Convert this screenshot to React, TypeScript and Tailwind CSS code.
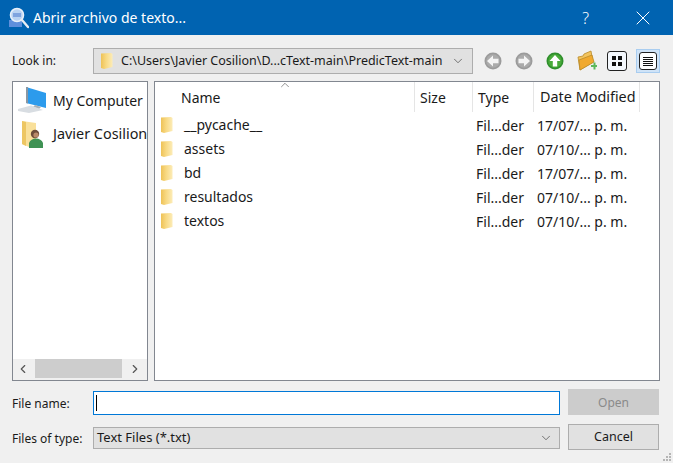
import { ChevronDown, ChevronLeft, ChevronRight, ChevronUp, X } from 'lucide-react';

const folders = [
    { name: '__pycache__', date: '17/07/... p. m.' },
    { name: 'assets', date: '07/10/... p. m.' },
    { name: 'bd', date: '17/07/... p. m.' },
    { name: 'resultados', date: '07/10/... p. m.' },
    { name: 'textos', date: '07/10/... p. m.' },
];

function FolderIcon() {
    return (
        <svg width="14" height="18" viewBox="0 0 14 18" className="shrink-0">
            <defs>
                <linearGradient id="folderFill" x1="0" y1="0" x2="1" y2="0">
                    <stop offset="0" stopColor="#eec257" />
                    <stop offset="0.45" stopColor="#f8d983" />
                    <stop offset="1" stopColor="#fcecb8" />
                </linearGradient>
            </defs>
            <path d="M1 1.5 L11 1 L12.5 2 L12.5 15 L4 17 L1 16 Z" fill="url(#folderFill)" />
        </svg>
    );
}

function SearchLogo() {
    return (
        <svg width="20" height="22" viewBox="0 0 20 22" className="shrink-0">
            <rect x="0" y="13" width="13" height="7" fill="#5f8fdc" />
            <circle cx="8" cy="8" r="6.5" fill="#b9d3f2" stroke="#e8f0fa" strokeWidth="1.6" />
            <rect x="4" y="6" width="8" height="4" fill="#7fa4df" />
            <path d="M13 13 L19 20" stroke="#e9edf3" strokeWidth="2.4" strokeLinecap="round" />
        </svg>
    );
}

function ArrowButton({ direction, green }: { direction: 'left' | 'right' | 'up'; green?: boolean }) {
    const rotate = direction === 'left' ? 'rotate(-90 9 9)' : direction === 'right' ? 'rotate(90 9 9)' : undefined;
    return (
        <svg width="18" height="18" viewBox="0 0 18 18">
            <circle cx="9" cy="9" r="8.5" fill={green ? '#2f8f2c' : '#9b9b9b'} />
            <circle cx="9" cy="9" r="6.8" fill={green ? '#49ab3a' : '#ababab'} />
            <path d="M9 3 L14.5 9 L11.2 9 L11.2 14.5 L6.8 14.5 L6.8 9 L3.5 9 Z" fill={green ? '#ffffff' : '#f4f4f4'} transform={rotate} />
        </svg>
    );
}

function NewFolderIcon() {
    return (
        <svg width="20" height="22" viewBox="0 0 20 22">
            <path d="M1 7 L6 6 L7 4 L14 1 L16 12 L3 20 Z" fill="#f2c35d" stroke="#b98a2a" strokeWidth="0.8" />
            <path d="M2 10 L15 5 L17 12 L3 20 Z" fill="#f0a92f" stroke="#b98a2a" strokeWidth="0.8" />
            <path d="M14 15 h2.5 v-2.5 h2 v2.5 h1.5 v2 h-1.5 v2.5 h-2 v-2.5 h-2.5 Z" fill="#5cb85c" />
        </svg>
    );
}

function MyComputerIcon() {
    return (
        <svg width="30" height="28" viewBox="0 0 30 28" className="shrink-0">
            <path d="M9 1 L29 7 L29 22 L9 17 Z" fill="#2c9bec" />
            <path d="M9 1 L11 1 L11 17.5 L9 17 Z" fill="#8a97a3" />
            <path d="M18 19 L24 21 L22 23 L16 21 Z" fill="#a6b0b8" />
            <path d="M1 23 L14 19.5 L26 24 L12 27 L1 25 Z" fill="#d8dde2" />
        </svg>
    );
}

function UserFolderIcon() {
    return (
        <svg width="24" height="28" viewBox="0 0 24 28" className="shrink-0">
            <path d="M1 1 L15 3 L15 24 L8 27 L1 24 Z" fill="#f9e09a" />
            <path d="M1 1 L5 2 L5 26 L1 24 Z" fill="#edc662" />
            <circle cx="14" cy="14" r="4.2" fill="#6e4d3a" />
            <circle cx="15" cy="15" r="2.6" fill="#b98a6a" />
            <path d="M8 28 L8 23 C10 17 20 17 22 23 L22 28 Z" fill="#3f9254" />
        </svg>
    );
}

function Combo({ children }: { children: React.ReactNode }) {
    return (
        <div className="flex flex-1 items-center border border-[#adadad] bg-[#e1e1e1]">
            {children}
        </div>
    );
}

export default function App() {
    return (
        <div className="relative flex h-[463px] w-[673px] flex-col overflow-hidden bg-[#f0f0f0] text-[13px] text-[#1a1a1a] [font-family:'Noto_Sans',sans-serif]">
            {/* Title bar */}
            <div className="flex h-[35px] shrink-0 items-center bg-[#0063b1] pl-[9px] text-white">
                <SearchLogo />
                <span className="ml-[4px] text-[14px]">Abrir archivo de texto...</span>
                <span className="ml-auto text-[16px] font-light">?</span>
                <X size={24} strokeWidth={1} className="ml-[42px] mr-[18px]" />
            </div>

            <div className="flex flex-1 flex-col pl-[12px] pr-[13px] pt-[13px]">
                {/* Look in row */}
                <div className="flex h-[26px] items-center">
                    <span className="w-[81px] text-[12px]">Look in:</span>
                    <div className="flex h-[26px] w-[380px]">
                        <Combo>
                            <div className="ml-[6px]"><FolderIcon /></div>
                            <span className="ml-[7px] text-[12.5px]">C:\Users\Javier Cosilion\D...cText-main\PredicText-main</span>
                            <ChevronDown size={14} strokeWidth={1.2} className="ml-auto mr-[7px] text-[#444]" />
                        </Combo>
                    </div>
                    <div className="ml-[11px] flex items-center">
                        <ArrowButton direction="left" />
                        <div className="ml-[13px]"><ArrowButton direction="right" /></div>
                        <div className="ml-[13px]"><ArrowButton direction="up" green /></div>
                        <div className="ml-[13px]"><NewFolderIcon /></div>
                        <div className="ml-[10px] flex h-[20px] w-[20px] items-center justify-center rounded-[3px] border border-[#222] bg-[#f4f8fd]">
                            <div className="grid grid-cols-2 gap-[2px]">
                                <span className="h-[4px] w-[4px] bg-[#111]" />
                                <span className="h-[4px] w-[4px] bg-[#111]" />
                                <span className="h-[4px] w-[4px] bg-[#111]" />
                                <span className="h-[4px] w-[4px] bg-[#111]" />
                            </div>
                        </div>
                        <div className="ml-[9px] flex h-[24px] w-[24px] items-center justify-center border border-[#a9cdf0] bg-[#cfe3f7]">
                            <div className="flex h-[18px] w-[18px] flex-col items-center justify-center gap-[1px] rounded-[3px] border border-[#222] bg-white">
                                <span className="h-px w-[10px] bg-[#111]" />
                                <span className="h-px w-[10px] bg-[#111]" />
                                <span className="h-px w-[10px] bg-[#111]" />
                                <span className="h-px w-[10px] bg-[#111]" />
                                <span className="h-px w-[10px] bg-[#111]" />
                            </div>
                        </div>
                    </div>
                </div>

                {/* Panels */}
                <div className="mt-[7px] flex h-[300px] gap-[6px]">
                    <div className="flex w-[136px] flex-col overflow-hidden border border-[#828790] bg-white">
                        <div className="flex flex-1 flex-col overflow-hidden">
                            <div className="flex h-[33px] items-center pl-[4px] pt-[3px]">
                                <MyComputerIcon />
                                <span className="ml-[6px] whitespace-nowrap text-[14px]">My Computer</span>
                            </div>
                            <div className="flex h-[34px] items-center pl-[8px] pt-[3px]">
                                <UserFolderIcon />
                                <span className="ml-[8px] whitespace-nowrap text-[14.4px]">Javier Cosilion</span>
                            </div>
                        </div>
                        <div className="flex h-[21px] items-start bg-[#f0f0f0]">
                            <ChevronLeft size={14} strokeWidth={2} className="ml-[3px] mt-[3px] text-[#555]" />
                            <div className="ml-[5px] h-[19px] w-[87px] bg-[#cdcdcd]" />
                            <ChevronRight size={14} strokeWidth={2} className="ml-[6px] mt-[3px] text-[#555]" />
                        </div>
                    </div>

                    <div className="relative flex-1 border border-[#828790] bg-white">
                        <ChevronUp size={14} strokeWidth={1.2} className="absolute left-[123px] top-[-4px] text-[#666]" />
                        <div className="flex h-[30px] items-center text-[14px]">
                            <div className="flex h-full w-[260px] items-center border-r border-[#e5e5e5] pl-[26px]">Name</div>
                            <div className="flex h-full w-[58px] items-center border-r border-[#e5e5e5] pl-[5px]">Size</div>
                            <div className="flex h-full w-[61px] items-center border-r border-[#e5e5e5] pl-[5px]">Type</div>
                            <div className="flex h-full w-[106px] items-center border-r border-[#e5e5e5] pl-[6px] text-[14.4px] whitespace-nowrap">Date Modified</div>
                        </div>
                        <div className="mt-[1px] flex flex-col">
                            {folders.map((folder) => (
                                <div key={folder.name} className="flex h-[24px] items-center">
                                    <div className="flex w-[260px] items-center pl-[5px]">
                                        <FolderIcon />
                                        <span className="ml-[10px] mt-[-2px] text-[14px]">{folder.name}</span>
                                    </div>
                                    <div className="w-[58px]" />
                                    <div className="w-[61px] pl-[3px] text-[14px]">Fil...der</div>
                                    <div className="pl-[3px] text-[14px] whitespace-nowrap">{folder.date}</div>
                                </div>
                            ))}
                        </div>
                    </div>
                </div>

                {/* File name row */}
                <div className="mt-[8px] flex h-[26px] items-center">
                    <span className="w-[81px] pt-[3px] text-[12px]">File name:</span>
                    <div className="mt-[2px] flex h-[24px] w-[467px] items-center border border-[#0078d7] bg-white pl-[2px]">
                        <span className="h-[16px] w-px bg-black" />
                    </div>
                    <div className="ml-[8px] flex h-[26px] w-[91px] items-center justify-center bg-[#cccccc] pt-[1px] text-[12px] text-[#8a8a8a]">Open</div>
                </div>

                {/* Files of type row */}
                <div className="mt-[9px] flex h-[26px] items-center">
                    <span className="w-[81px] pt-[3px] text-[12px]">Files of type:</span>
                    <div className="mt-[2px] flex h-[22px] w-[467px]">
                        <Combo>
                            <span className="ml-[3px] text-[13px]">Text Files (*.txt)</span>
                            <ChevronDown size={14} strokeWidth={1.2} className="ml-auto mr-[6px] text-[#444]" />
                        </Combo>
                    </div>
                    <div className="ml-[8px] flex h-[26px] w-[91px] items-center justify-center border border-[#adadad] bg-[#e1e1e1] text-[12.5px]">Cancel</div>
                </div>
            </div>

            {/* Resize grip */}
            <div className="absolute bottom-[2px] right-[2px] grid grid-cols-3 gap-px">
                <span />
                <span />
                <span className="h-[2px] w-[2px] bg-[#b5b5b5]" />
                <span />
                <span className="h-[2px] w-[2px] bg-[#b5b5b5]" />
                <span className="h-[2px] w-[2px] bg-[#b5b5b5]" />
                <span className="h-[2px] w-[2px] bg-[#b5b5b5]" />
                <span className="h-[2px] w-[2px] bg-[#b5b5b5]" />
                <span className="h-[2px] w-[2px] bg-[#b5b5b5]" />
            </div>
        </div>
    );
}
